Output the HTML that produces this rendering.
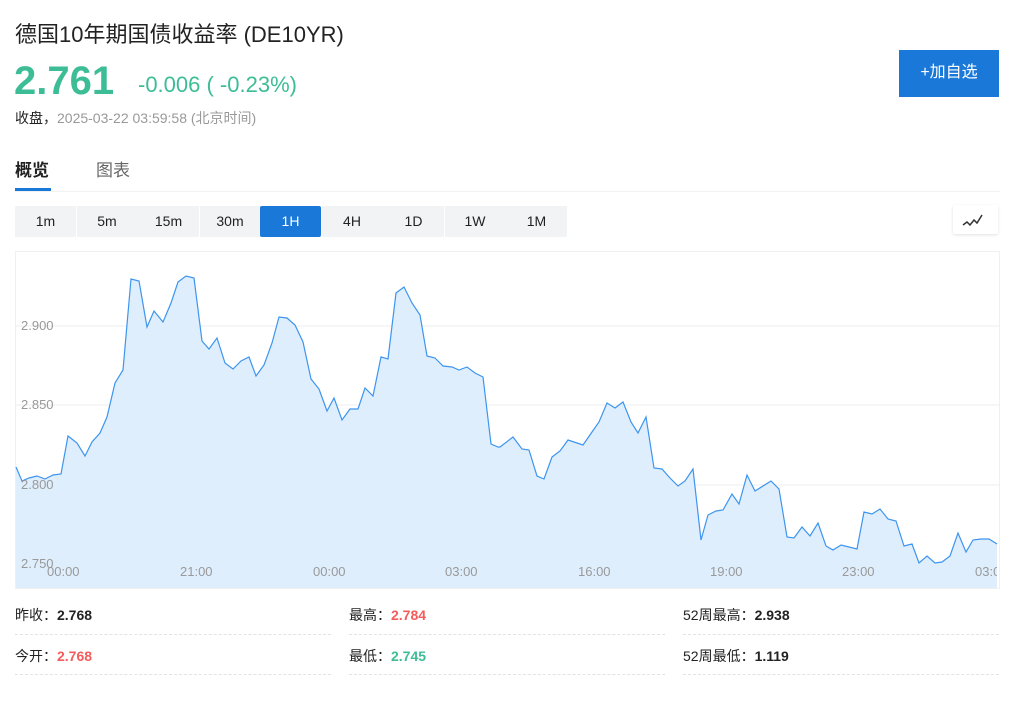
<!DOCTYPE html><html><head><meta charset="utf-8"><style>
body{margin:0;width:1024px;height:702px;background:#fff;font-family:"Liberation Sans","Noto Sans CJK SC",sans-serif;position:relative;overflow:hidden}
.a{position:absolute;white-space:nowrap}
.tb{position:absolute;top:206px;height:31px;width:61px;background:#f2f3f5;text-align:center;line-height:31px;font-size:14px;color:#222}
.st{position:absolute;font-size:14px;color:#222;font-weight:bold}
.ln{position:absolute;height:0;border-top:1px dashed #e3e3e3;width:316px}
.ax{position:absolute;font-size:13px;color:#999}
</style></head><body>
<div class="a" style="left:15px;top:17px;font-size:22px;color:#222">德国10年期国债收益率 (DE10YR)</div>
<div class="a" style="left:14px;top:58px;font-size:40px;font-weight:bold;color:#3dbd96;line-height:46px">2.761</div>
<div class="a" style="left:138px;top:72px;font-size:22px;color:#3dbd96">-0.006 ( -0.23%)</div>
<div class="a" style="left:15px;top:108px;font-size:14px;color:#222">收盘，<span style="color:#999">2025-03-22 03:59:58 (北京时间)</span></div>
<div class="a" style="left:899px;top:50px;width:100px;height:47px;background:#1a78d9;color:#fff;font-size:16px;text-align:center;line-height:46px">+加自选</div>
<div class="a" style="left:15px;top:156px;font-size:17px;font-weight:bold;color:#222">概览</div>
<div class="a" style="left:96px;top:156px;font-size:17px;color:#666">图表</div>
<div class="a" style="left:15px;top:188px;width:36px;height:3px;background:#1a78d9"></div>
<div class="a" style="left:15px;top:191px;width:985px;height:1px;background:#f2f2f2"></div>
<div class="tb" style="left:15px">1m</div><div class="tb" style="left:76.5px">5m</div><div class="tb" style="left:138px">15m</div><div class="tb" style="left:199.5px">30m</div>
<div class="tb" style="left:260px;background:#1a78d9;color:#fff;border-radius:2px">1H</div>
<div class="tb" style="left:321.5px">4H</div><div class="tb" style="left:383px">1D</div><div class="tb" style="left:444.5px">1W</div><div class="tb" style="left:506px">1M</div>
<div class="a" style="left:953px;top:205px;width:45px;height:29px;background:#fff;box-shadow:0 1px 3px rgba(0,0,0,.12);border-radius:2px">
<svg width="45" height="29"><polyline points="10,20 14,17 17,20 21,15 24,18 29,10" fill="none" stroke="#333" stroke-width="1.5"/></svg></div>
<svg class="a" style="left:0;top:0" width="1024" height="600">
<rect x="15.5" y="251.5" width="984" height="337" fill="none" stroke="#f0f0f0"/>
<g stroke="#eeeeee"><line x1="15" x2="1000" y1="326" y2="326"/><line x1="15" x2="1000" y1="405" y2="405"/><line x1="15" x2="1000" y1="485" y2="485"/></g>
<polygon fill="#dfeefd" points="16,588 16,467 22,481 29,478 37,476 45,479 53,475 61,474 68,436 77,443 85,456 92,442 100,433 107,417 115,383 123,370 131,279 139,281 147,327 154,311 163,322 171,303 178,282 186,276 194,278 202,341 209,349 217,338 225,363 233,369 241,361 249,357 256,376 264,365 272,343 279,317 287,318 295,325 303,342 311,379 319,389 327,411 334,398 342,420 350,409 358,409 365,388 373,396 381,357 388,359 396,293 404,287 412,303 420,315 427,356 435,358 443,366 452,367 459,370 467,367 475,373 483,377 491,444 498,447 500,447 513,437 522,449 529,450 537,476 544,479 552,457 560,451 568,440 583,445 592,432 599,422 607,403 615,408 623,402 631,422 638,433 646,417 654,468 662,469 670,478 678,486 685,481 693,469 701,540 708,515 716,511 723,510 732,494 739,504 747,475 755,491 771,481 779,489 787,537 794,538 802,527 810,536 818,523 826,546 833,550 841,545 849,547 857,549 864,512 872,514 880,509 888,519 896,521 904,546 912,544 919,563 927,556 935,563 942,562 950,556 958,533 966,552 973,540 981,539 989,539 997,544 997,588"/>
<polyline fill="none" stroke="#3d95ee" stroke-width="1.2" points="16,467 22,481 29,478 37,476 45,479 53,475 61,474 68,436 77,443 85,456 92,442 100,433 107,417 115,383 123,370 131,279 139,281 147,327 154,311 163,322 171,303 178,282 186,276 194,278 202,341 209,349 217,338 225,363 233,369 241,361 249,357 256,376 264,365 272,343 279,317 287,318 295,325 303,342 311,379 319,389 327,411 334,398 342,420 350,409 358,409 365,388 373,396 381,357 388,359 396,293 404,287 412,303 420,315 427,356 435,358 443,366 452,367 459,370 467,367 475,373 483,377 491,444 498,447 500,447 513,437 522,449 529,450 537,476 544,479 552,457 560,451 568,440 583,445 592,432 599,422 607,403 615,408 623,402 631,422 638,433 646,417 654,468 662,469 670,478 678,486 685,481 693,469 701,540 708,515 716,511 723,510 732,494 739,504 747,475 755,491 771,481 779,489 787,537 794,538 802,527 810,536 818,523 826,546 833,550 841,545 849,547 857,549 864,512 872,514 880,509 888,519 896,521 904,546 912,544 919,563 927,556 935,563 942,562 950,556 958,533 966,552 973,540 981,539 989,539 997,544"/>
</svg>
<div class="ax" style="left:21px;top:318px">2.900</div><div class="ax" style="left:21px;top:397px">2.850</div><div class="ax" style="left:21px;top:477px">2.800</div><div class="ax" style="left:21px;top:556px">2.750</div>
<div class="ax" style="left:47px;top:564px">00:00</div><div class="ax" style="left:180px;top:564px">21:00</div><div class="ax" style="left:313px;top:564px">00:00</div><div class="ax" style="left:445px;top:564px">03:00</div>
<div class="ax" style="left:578px;top:564px">16:00</div><div class="ax" style="left:710px;top:564px">19:00</div><div class="ax" style="left:842px;top:564px">23:00</div><div class="ax" style="left:975px;top:564px;width:22px;overflow:hidden">03:00</div>
<div class="st" style="left:15px;top:605px"><span style="font-weight:normal">昨收：</span>2.768</div>
<div class="st" style="left:15px;top:646px"><span style="font-weight:normal">今开：</span><span style="color:#f55b5b">2.768</span></div>
<div class="st" style="left:349px;top:605px"><span style="font-weight:normal">最高：</span><span style="color:#f55b5b">2.784</span></div>
<div class="st" style="left:349px;top:646px"><span style="font-weight:normal">最低：</span><span style="color:#3dbd96">2.745</span></div>
<div class="st" style="left:683px;top:605px"><span style="font-weight:normal">52周最高：</span>2.938</div>
<div class="st" style="left:683px;top:646px"><span style="font-weight:normal">52周最低：</span>1.119</div>
<div class="ln" style="left:15px;top:634px"></div><div class="ln" style="left:349px;top:634px"></div><div class="ln" style="left:683px;top:634px"></div>
<div class="ln" style="left:15px;top:674px"></div><div class="ln" style="left:349px;top:674px"></div><div class="ln" style="left:683px;top:674px"></div>
</body></html>
